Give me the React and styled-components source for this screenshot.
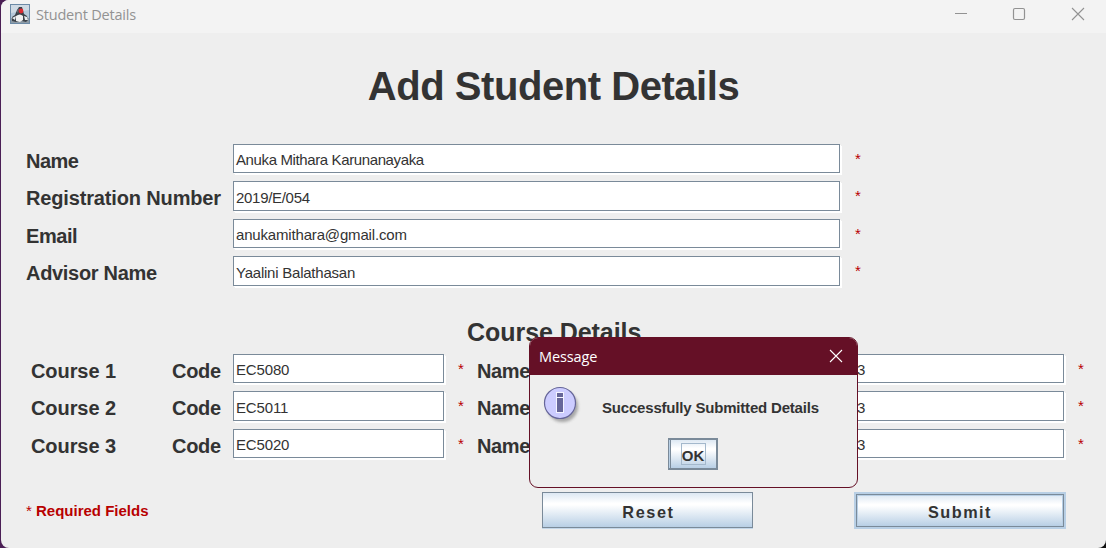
import React from 'react';
import styled, { createGlobalStyle } from 'styled-components';

const GlobalStyle = createGlobalStyle`
  * { box-sizing: border-box; }
  body {
    margin: 0;
    overflow: hidden;
    background: linear-gradient(90deg, #4b1f55 0, #4b1f55 50%, #111 50%);
    font-family: "Liberation Sans", Arial, sans-serif;
    color: #333;
  }
`;

const Window = styled.div`
  position: relative;
  width: 1105px;
  height: 548px;
  margin-left: 1px;
  background: #eeeeee;
  border-radius: 8px 0 8px 8px;
  overflow: hidden;
`;

const TitleBar = styled.header`
  display: flex;
  align-items: center;
  height: 33px;
  padding: 0 21px 5px 9px;
  background: #f3f3f3;
  color: #929292;
`;

const WindowTitle = styled.span`
  flex: 1;
  margin-left: 6px;
  padding-top: 2px;
  font: 14.5px/20px "Open Sans", sans-serif;
  letter-spacing: -0.2px;
`;

const WindowControls = styled.div`
  display: flex;
  gap: 44px;
  svg:last-child { margin-left: 1px; }
`;

const Heading = styled.h1`
  margin: 30px 0 0;
  height: 46px;
  text-align: center;
  font-size: 40px;
  line-height: 46px;
  letter-spacing: -0.45px;
`;

const Section = styled.section`
  margin-top: ${(p) => p.$top}px;
`;

const StudentRow = styled.div`
  display: grid;
  grid-template-columns: 207px 622px 20px;
  height: ${(p) => p.$height}px;
  padding-left: 25px;
`;

const CourseRow = styled.div`
  display: grid;
  grid-template-columns: 141px 61px 225px 19px 65px 313px 223px 20px;
  height: ${(p) => p.$height}px;
  padding-left: 30px;
`;

const Label = styled.label`
  padding-top: 6px;
  font-size: 20px;
  font-weight: bold;
  line-height: 23px;
  letter-spacing: ${(p) => p.$spacing || 0}px;
  white-space: nowrap;
`;

const Field = styled.div`
  width: ${(p) => p.$width}px;
  height: ${(p) => p.$height}px;
  padding: ${(p) => p.$height - 23}px 0 0 ${(p) => p.$inset ?? 2}px;
  border: 1px solid #7a8a99;
  background: #fff;
  box-shadow: 1px 1px 0 #fff, 2px 2px 0 #fff;
  font-size: 15px;
  line-height: 17px;
  letter-spacing: ${(p) => p.$spacing || 0}px;
  white-space: nowrap;
`;

const Star = styled.span`
  padding-top: 6px;
  color: #b80000;
  font-size: 15px;
  line-height: 17px;
`;

const SectionTitle = styled.h2`
  height: 35px;
  margin: 0;
  padding-left: 466px;
  font-size: 25px;
  line-height: 27px;
  letter-spacing: -0.05px;
`;

const Footer = styled.footer`
  display: flex;
  align-items: flex-start;
  height: 40px;
  margin-top: 25px;
  padding-left: 25px;
`;

const Required = styled.p`
  width: 516px;
  margin: 10px 0 0;
  color: #b80000;
  font-size: 15px;
  font-weight: bold;
  line-height: 17px;
  span { font-weight: normal; }
`;

const Button = styled.button`
  width: ${(p) => p.$width}px;
  height: ${(p) => p.$height}px;
  margin: 0;
  padding: 3px 0 0 2px;
  border: 1px solid #7a8a99;
  border-radius: 0;
  background: linear-gradient(#dde8f3 0%, #fff 30%, #fff 35%, #b8cfe5 100%);
  color: #333;
  font: bold ${(p) => p.$size || 16.25}px/18px "Liberation Sans", Arial, sans-serif;
  letter-spacing: ${(p) => p.$spacing || 0}px;
`;

const ResetButton = styled(Button)`
  margin-right: 102px;
  box-shadow: 0 1px 0 #c4d7e9;
`;

const SubmitButton = styled(Button)`
  margin: 2px 0 0 1px;
  padding: 3px 0 0;
  box-shadow: 0 0 0 2px #b8cfe5, inset 0 0 0 1px #b8cfe5;
`;

const Dialog = styled.div`
  position: absolute;
  left: 528px;
  top: 337px;
  width: 329px;
  height: 151px;
  border: 1px solid #651026;
  border-radius: 9px;
  background: #eee;
  overflow: hidden;
`;

const DialogBar = styled.div`
  display: flex;
  align-items: center;
  justify-content: space-between;
  height: 37px;
  padding: 0 14px 0 9px;
  background: #651026;
  color: #fff;
  font: 14.5px/20px "Open Sans", sans-serif;
  letter-spacing: -0.1px;
  svg { margin-top: -1px; }
`;

const DialogBody = styled.div`
  display: flex;
  height: 64px;
  padding: 11px 0 0 13px;
`;

const DialogText = styled.p`
  margin: 13px 0 0 19px;
  font-size: 15px;
  font-weight: bold;
  line-height: 17px;
  letter-spacing: -0.19px;
  white-space: nowrap;
`;

const OkButton = styled(Button)`
  display: flex;
  justify-content: center;
  margin: -1px 0 0 138px;
  padding: 3px 0 0 1px;
  border-width: 2px;
  border-left-width: 1px;
  box-shadow: inset 1px 0 0 #b8cfe5, inset 2px 0 0 #7a8a99;
`;

const FocusRing = styled.span`
  width: 25px;
  height: 22px;
  padding-top: 3px;
  border: 1px solid #a3b8cc;
`;

const JavaIcon = () => (
  <svg width="20" height="20" viewBox="0 0 20 20">
    <rect width="20" height="20" fill="#6c8aa6" />
    <rect x="1" y="1" width="18" height="18" fill="#b5c8d9" />
    <path d="M1 1h18v5L1 9z" fill="#cfdae4" />
    <path d="M1 14h18v5H1z" fill="#8d9ba6" />
    <path d="M2 13 5 11 7 6l2-3 3 0 2 7 3 2 1 4-2 2-4-1-6 1-4-1z" fill="#3b4148" />
    <path d="M6 12q4-3 7 0l0 4-3 2-4-1z" fill="#f0f1f1" />
    <path d="m14 12 3 1 1 3-3 0zM2 14l4-2-1 4z" fill="#e9edf0" />
    <path d="M9 4 7 7l1 3z" fill="#6b747c" />
    <circle cx="11" cy="7" r="2.4" fill="#dd2b32" />
  </svg>
);

const CloseIcon = () => (
  <svg width="14" height="14" viewBox="0 0 14 14" fill="none" stroke="currentColor" strokeWidth="1.1">
    <path d="m1 1 12 12M13 1 1 13" />
  </svg>
);

const MinimizeIcon = () => (
  <svg width="14" height="14" viewBox="0 0 14 14" fill="none" stroke="currentColor">
    <path d="M1 6.5h12" />
  </svg>
);

const MaximizeIcon = () => (
  <svg width="14" height="14" viewBox="0 0 14 14" fill="none" stroke="currentColor" strokeWidth="1.2">
    <rect x="1.5" y="1.5" width="11" height="11" rx="1.5" />
  </svg>
);

const InfoIcon = () => (
  <svg width="40" height="40" viewBox="0 0 40 40">
    <defs>
      <filter id="shade" x="-20%" y="-20%" width="140%" height="140%">
        <feGaussianBlur stdDeviation="1.6" />
      </filter>
    </defs>
    <circle cx="19.5" cy="20.5" r="15.5" fill="#777" opacity=".6" filter="url(#shade)" />
    <circle cx="17" cy="17" r="15.5" fill="#ccccff" stroke="#666699" strokeWidth="1.2" />
    <rect x="13" y="6" width="8" height="21" fill="#f4f4ff" />
    <rect x="14" y="7" width="6" height="4" fill="#666699" />
    <rect x="14" y="12" width="6" height="14" fill="#666699" />
  </svg>
);

const students = [
  { label: 'Name', value: 'Anuka Mithara Karunanayaka', row: 37, field: 29, labelSpacing: -0.5, spacing: -0.38 },
  { label: 'Registration Number', value: '2019/E/054', row: 38, field: 30, labelSpacing: -0.15, spacing: -0.3 },
  { label: 'Email', value: 'anukamithara@gmail.com', row: 37, field: 29, labelSpacing: -0.45, spacing: -0.17 },
  { label: 'Advisor Name', value: 'Yaalini Balathasan', row: 38, field: 30, labelSpacing: -0.31, spacing: -0.23 },
];

const courses = [
  { label: 'Course 1', code: 'EC5080', row: 37, field: 29 },
  { label: 'Course 2', code: 'EC5011', row: 38, field: 30 },
  { label: 'Course 3', code: 'EC5020', row: 38, field: 29 },
];

export default function App() {
  return (
    <>
      <GlobalStyle />
      <Window>
        <TitleBar>
          <JavaIcon />
          <WindowTitle>Student Details</WindowTitle>
          <WindowControls>
            <MinimizeIcon />
            <MaximizeIcon />
            <CloseIcon />
          </WindowControls>
        </TitleBar>
        <Heading>Add Student Details</Heading>
        <Section $top={35}>
          {students.map((s) => (
            <StudentRow key={s.label} $height={s.row}>
              <Label $spacing={s.labelSpacing}>{s.label}</Label>
              <Field $width={607} $height={s.field} $spacing={s.spacing}>{s.value}</Field>
              <Star>*</Star>
            </StudentRow>
          ))}
        </Section>
        <Section $top={25}>
          <SectionTitle>Course Details</SectionTitle>
          {courses.map((c) => (
            <CourseRow key={c.label} $height={c.row}>
              <Label $spacing={-0.08}>{c.label}</Label>
              <Label $spacing={-0.3}>Code</Label>
              <Field $width={211} $height={c.field} $spacing={-0.15}>{c.code}</Field>
              <Star>*</Star>
              <Label $spacing={-0.4}>Name</Label>
              <Field $width={211} $height={c.field} />
              <Field $width={209} $height={c.field} $inset={1}>3</Field>
              <Star>*</Star>
            </CourseRow>
          ))}
        </Section>
        <Footer>
          <Required><span>*</span> Required Fields</Required>
          <ResetButton $width={211} $height={36} $spacing={1.6}>Reset</ResetButton>
          <SubmitButton $width={208} $height={33} $spacing={1.5}>Submit</SubmitButton>
        </Footer>
        <Dialog role="dialog">
          <DialogBar>
            Message
            <CloseIcon />
          </DialogBar>
          <DialogBody>
            <InfoIcon />
            <DialogText>Successfully Submitted Details</DialogText>
          </DialogBody>
          <OkButton $width={50} $height={32} $size={15}>
            <FocusRing>OK</FocusRing>
          </OkButton>
        </Dialog>
      </Window>
    </>
  );
}
